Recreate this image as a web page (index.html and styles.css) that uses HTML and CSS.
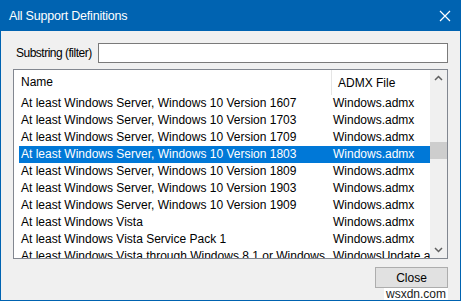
FILE: index.html
```html
<!DOCTYPE html>
<html lang="en">
<head>
    <meta charset="UTF-8">
    <title>All Support Definitions</title>
    <link rel="stylesheet" href="styles.css">
</head>
<body>
    <div class="janela">
        <div class="titulo">
            <span>All Support Definitions</span>
            <svg class="fechar" width="12" height="12" viewBox="0 0 12 12">
                <path d="M1 1 L11 11 M11 1 L1 11" stroke="#fff" stroke-width="1.2"/>
            </svg>
        </div>

        <div class="conteudo">
            <div class="filtro">
                <label>Substring (filter)</label>
                <input type="text">
            </div>

            <div class="lista">
                <div class="tabela">
                    <div class="cabecalho">
                        <div class="col-nome">Name</div>
                        <div class="col-arquivo">ADMX File</div>
                    </div>
                    <div class="linha"><div class="col-nome">At least Windows Server, Windows 10 Version 1607</div><div class="col-arquivo">Windows.admx</div></div>
                    <div class="linha"><div class="col-nome">At least Windows Server, Windows 10 Version 1703</div><div class="col-arquivo">Windows.admx</div></div>
                    <div class="linha"><div class="col-nome">At least Windows Server, Windows 10 Version 1709</div><div class="col-arquivo">Windows.admx</div></div>
                    <div class="linha selecionada"><div class="col-nome">At least Windows Server, Windows 10 Version 1803</div><div class="col-arquivo">Windows.admx</div></div>
                    <div class="linha"><div class="col-nome">At least Windows Server, Windows 10 Version 1809</div><div class="col-arquivo">Windows.admx</div></div>
                    <div class="linha"><div class="col-nome">At least Windows Server, Windows 10 Version 1903</div><div class="col-arquivo">Windows.admx</div></div>
                    <div class="linha"><div class="col-nome">At least Windows Server, Windows 10 Version 1909</div><div class="col-arquivo">Windows.admx</div></div>
                    <div class="linha"><div class="col-nome">At least Windows Vista</div><div class="col-arquivo">Windows.admx</div></div>
                    <div class="linha"><div class="col-nome">At least Windows Vista Service Pack 1</div><div class="col-arquivo">Windows.admx</div></div>
                    <div class="linha"><div class="col-nome">At least Windows Vista through Windows 8.1 or Windows Server 2012 R2</div><div class="col-arquivo">WindowsUpdate.admx</div></div>
                </div>

                <div class="rolagem">
                    <svg width="17" height="17" viewBox="0 0 17 17"><path d="M5 10 L8.5 6.5 L12 10" fill="none" stroke="#606060" stroke-width="1.5"/></svg>
                    <div class="trilho"><div class="cursor"></div></div>
                    <svg width="17" height="17" viewBox="0 0 17 17"><path d="M5 7 L8.5 10.5 L12 7" fill="none" stroke="#606060" stroke-width="1.5"/></svg>
                </div>
            </div>

            <div class="rodape">
                <button>Close</button>
            </div>
        </div>
        <div class="marca">wsxdn.com</div>
    </div>
</body>
</html>
```

FILE: styles.css
```css
/* Estilos gerais */
body {
    margin: 0;
    font-family: "Liberation Sans", Arial, sans-serif;
    font-size: 12px;
    background-color: #f0f0f0;
}

.janela {
    position: relative;
    width: 461px;
    height: 301px;
    box-sizing: border-box;
    border: 1px solid #0063b1;
    border-top: none;
    background-color: #f0f0f0;
    display: flex;
    flex-direction: column;
}

/* Barra de titulo */
.titulo {
    height: 31px;
    margin: 0 -1px;
    background-color: #0063b1;
    color: white;
    display: flex;
    align-items: center;
    justify-content: space-between;
    padding: 0 10px 0 9px;
    font-size: 12.5px;
    letter-spacing: -0.2px;
}

.fechar {
    display: block;
}

/* Conteudo */
.conteudo {
    flex: 1;
    padding: 12px 12px 0 12px;
    display: flex;
    flex-direction: column;
}

.filtro {
    display: flex;
    align-items: center;
    height: 20px;
}

.filtro label {
    width: 82px;
    padding-left: 3px;
    color: #000;
    letter-spacing: -0.5px;
    white-space: nowrap;
}

.filtro input {
    flex: 1;
    height: 20px;
    box-sizing: border-box;
    border: 1px solid #7a7a7a;
    background-color: #fff;
    margin: 0;
    padding: 0 3px;
}

/* Lista */
.lista {
    margin-top: 6px;
    height: 190px;
    box-sizing: border-box;
    border: 1px solid #828790;
    background-color: #fff;
    display: flex;
    overflow: hidden;
}

.tabela {
    flex: 1;
    overflow: hidden;
}

.cabecalho {
    display: flex;
    height: 25px;
    align-items: center;
    white-space: nowrap;
}

.cabecalho .col-nome {
    border-right: 1px solid #e5e5e5;
    height: 25px;
    line-height: 25px;
    padding-left: 7px;
}

.linha {
    display: flex;
    height: 17px;
    line-height: 17px;
    margin-left: 5px;
    white-space: nowrap;
}

.linha .col-nome {
    padding-left: 2px;
    width: 306px;
}

.col-nome {
    width: 310px;
    overflow: hidden;
}

.col-arquivo {
    flex: 1;
    padding-left: 6px;
    overflow: hidden;
}

.selecionada {
    background-color: #0078d7;
    color: white;
}

/* Barra de rolagem */
.rolagem {
    width: 17px;
    background-color: #f0f0f0;
    display: flex;
    flex-direction: column;
}

.rolagem svg {
    display: block;
}

.trilho {
    flex: 1;
    padding-top: 55px;
}

.cursor {
    height: 17px;
    background-color: #cdcdcd;
}

/* Rodape */
.rodape {
    display: flex;
    justify-content: flex-end;
    margin-top: 8px;
}

.rodape button {
    width: 73px;
    height: 21px;
    font-family: "Liberation Sans", Arial, sans-serif;
    font-size: 12px;
    background-color: #e1e1e1;
    border: 1px solid #adadad;
    padding: 0;
}

.marca {
    position: absolute;
    right: 12px;
    bottom: 0;
    font-size: 12px;
    line-height: 12px;
    color: #222;
    background-color: #fff;
    padding: 0 2px;
}
```
